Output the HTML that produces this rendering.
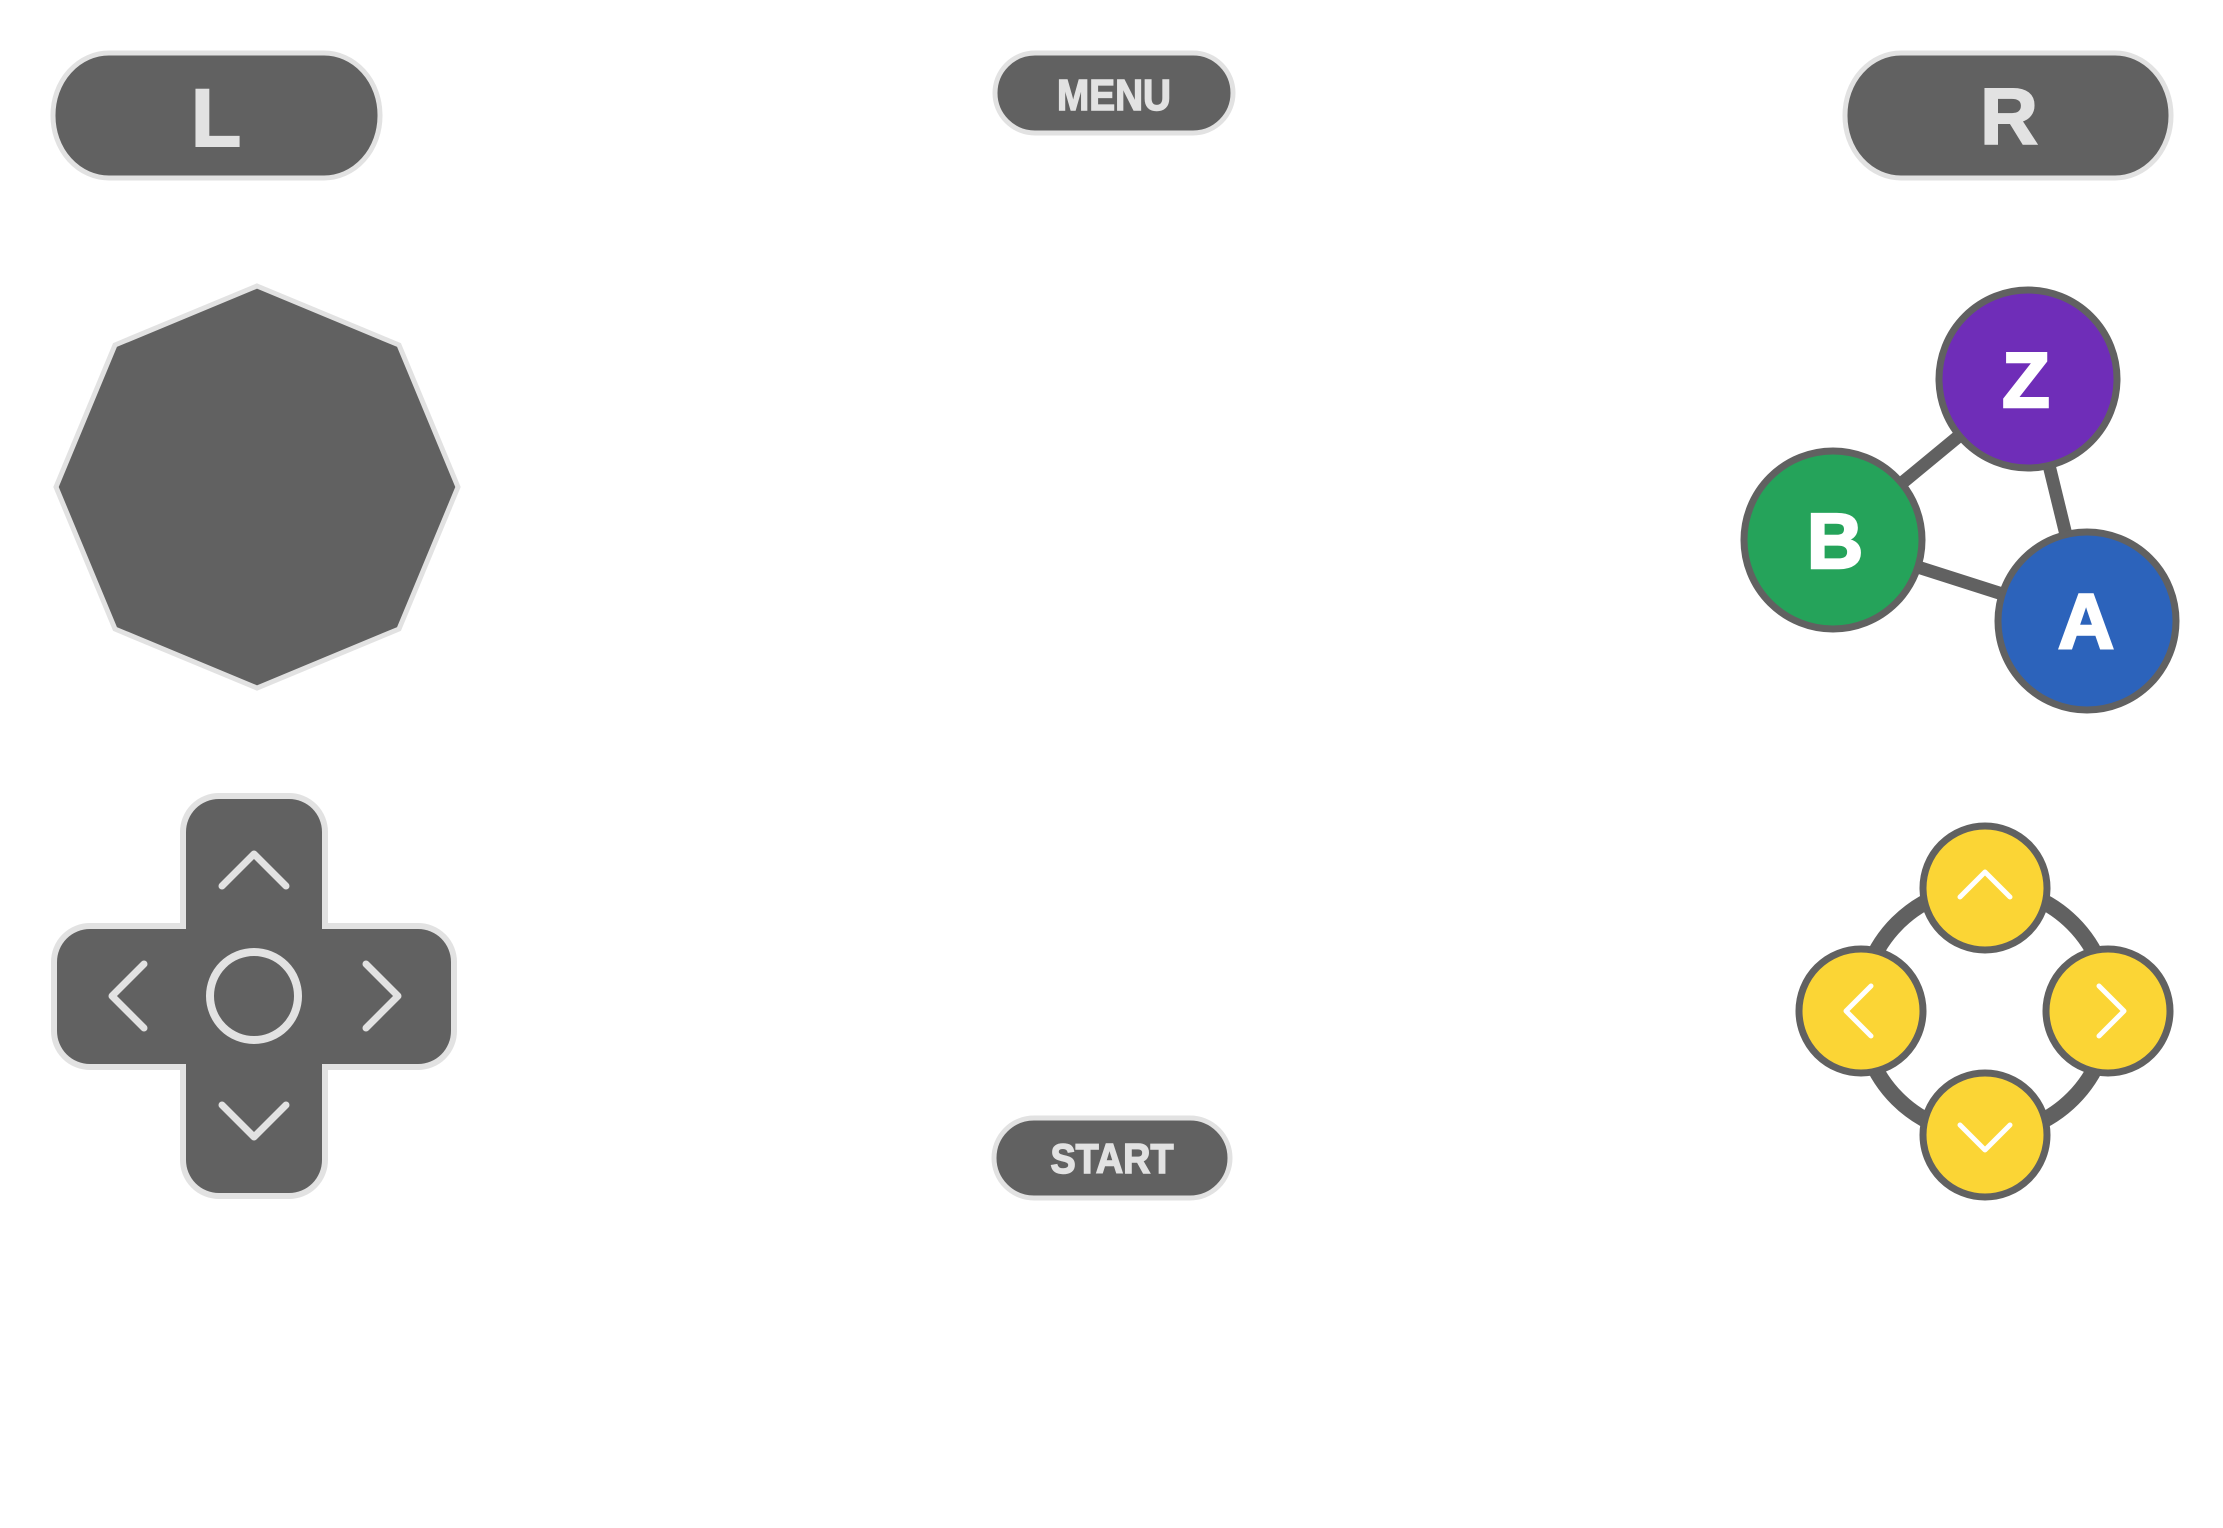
<!DOCTYPE html>
<html><head><meta charset="utf-8"><style>
html,body{margin:0;padding:0;background:#fff;width:2223px;height:1528px;overflow:hidden}
svg{display:block}
text{font-family:"Liberation Sans",sans-serif;font-weight:bold}
</style></head><body>
<svg width="2223" height="1528" viewBox="0 0 2223 1528" xmlns="http://www.w3.org/2000/svg">
<!-- L / R -->
<rect x="53" y="53" width="327" height="125" rx="56" ry="62" fill="#616161" stroke="#e2e2e2" stroke-width="5"/>
<text x="216" y="146" font-size="82" fill="#e2e2e2" stroke="#e2e2e2" stroke-width="2" text-anchor="middle">L</text>
<rect x="1845" y="53" width="326" height="125" rx="56" ry="62" fill="#616161" stroke="#e2e2e2" stroke-width="5"/>
<text x="2009" y="144" font-size="80" fill="#e2e2e2" stroke="#e2e2e2" stroke-width="2" text-anchor="middle">R</text>
<!-- MENU / START -->
<rect x="995" y="53" width="238" height="80" rx="40" ry="40" fill="#616161" stroke="#e2e2e2" stroke-width="5"/>
<text x="1114" y="110" font-size="44" fill="#e2e2e2" stroke="#e2e2e2" stroke-width="1.5" text-anchor="middle" textLength="114" lengthAdjust="spacingAndGlyphs">MENU</text>
<rect x="994" y="1118" width="236" height="80" rx="40" ry="40" fill="#616161" stroke="#e2e2e2" stroke-width="5"/>
<text x="1112" y="1173" font-size="42" fill="#e2e2e2" stroke="#e2e2e2" stroke-width="1.5" text-anchor="middle" textLength="123" lengthAdjust="spacingAndGlyphs">START</text>
<!-- octagon -->
<polygon points="257,286 399,345 458,487 399,629 257,688 115,629 56,487 115,345" fill="#616161" stroke="#e2e2e2" stroke-width="5" stroke-linejoin="miter"/>
<!-- dpad -->
<g>
<rect x="183" y="796" width="142" height="400" rx="36" fill="#e2e2e2" stroke="#e2e2e2" stroke-width="6"/>
<rect x="54" y="926" width="400" height="141" rx="36" fill="#e2e2e2" stroke="#e2e2e2" stroke-width="6"/>
<rect x="186" y="799" width="136" height="394" rx="33" fill="#616161"/>
<rect x="57" y="929" width="394" height="135" rx="33" fill="#616161"/>
<circle cx="254" cy="996" r="44" fill="none" stroke="#e2e2e2" stroke-width="8"/>
<g fill="none" stroke="#e2e2e2" stroke-width="7" stroke-linecap="round" stroke-linejoin="round">
<path d="M222,886 L254,854 L286,886"/>
<path d="M222,1105 L254,1137 L286,1105"/>
<path d="M144,964 L112,996 L144,1028"/>
<path d="M366,964 L398,996 L366,1028"/>
</g>
</g>
<!-- ABZ -->
<g stroke="#616161" stroke-width="13">
<line x1="2028" y1="379" x2="1833" y2="540"/>
<line x1="2028" y1="379" x2="2087" y2="621"/>
<line x1="1833" y1="540" x2="2087" y2="621"/>
</g>
<circle cx="2028" cy="379" r="89" fill="#6f2db8" stroke="#616161" stroke-width="7"/>
<circle cx="1833" cy="540" r="89" fill="#25a35a" stroke="#616161" stroke-width="7"/>
<circle cx="2087" cy="621" r="89" fill="#2c63bb" stroke="#616161" stroke-width="7"/>
<g fill="#fff" stroke="#fff" stroke-width="2.5">
<text x="2026" y="407" font-size="78" text-anchor="middle">Z</text>
<text x="1835" y="568" font-size="78" text-anchor="middle">B</text>
<text x="2086" y="648" font-size="78" text-anchor="middle">A</text>
</g>
<!-- C buttons -->
<circle cx="1985" cy="1011" r="124" fill="none" stroke="#616161" stroke-width="16"/>
<g fill="#fbd535" stroke="#616161" stroke-width="7">
<circle cx="1985" cy="888" r="62"/>
<circle cx="1861" cy="1011" r="62"/>
<circle cx="2108" cy="1011" r="62"/>
<circle cx="1985" cy="1135" r="62"/>
</g>
<g fill="none" stroke="#fff" stroke-width="5" stroke-linecap="round" stroke-linejoin="round">
<path d="M1960,897 L1985,872 L2010,897"/>
<path d="M1960,1125 L1985,1150 L2010,1125"/>
<path d="M1871,986 L1846,1011 L1871,1036"/>
<path d="M2099,986 L2124,1011 L2099,1036"/>
</g>
</svg>
</body></html>
